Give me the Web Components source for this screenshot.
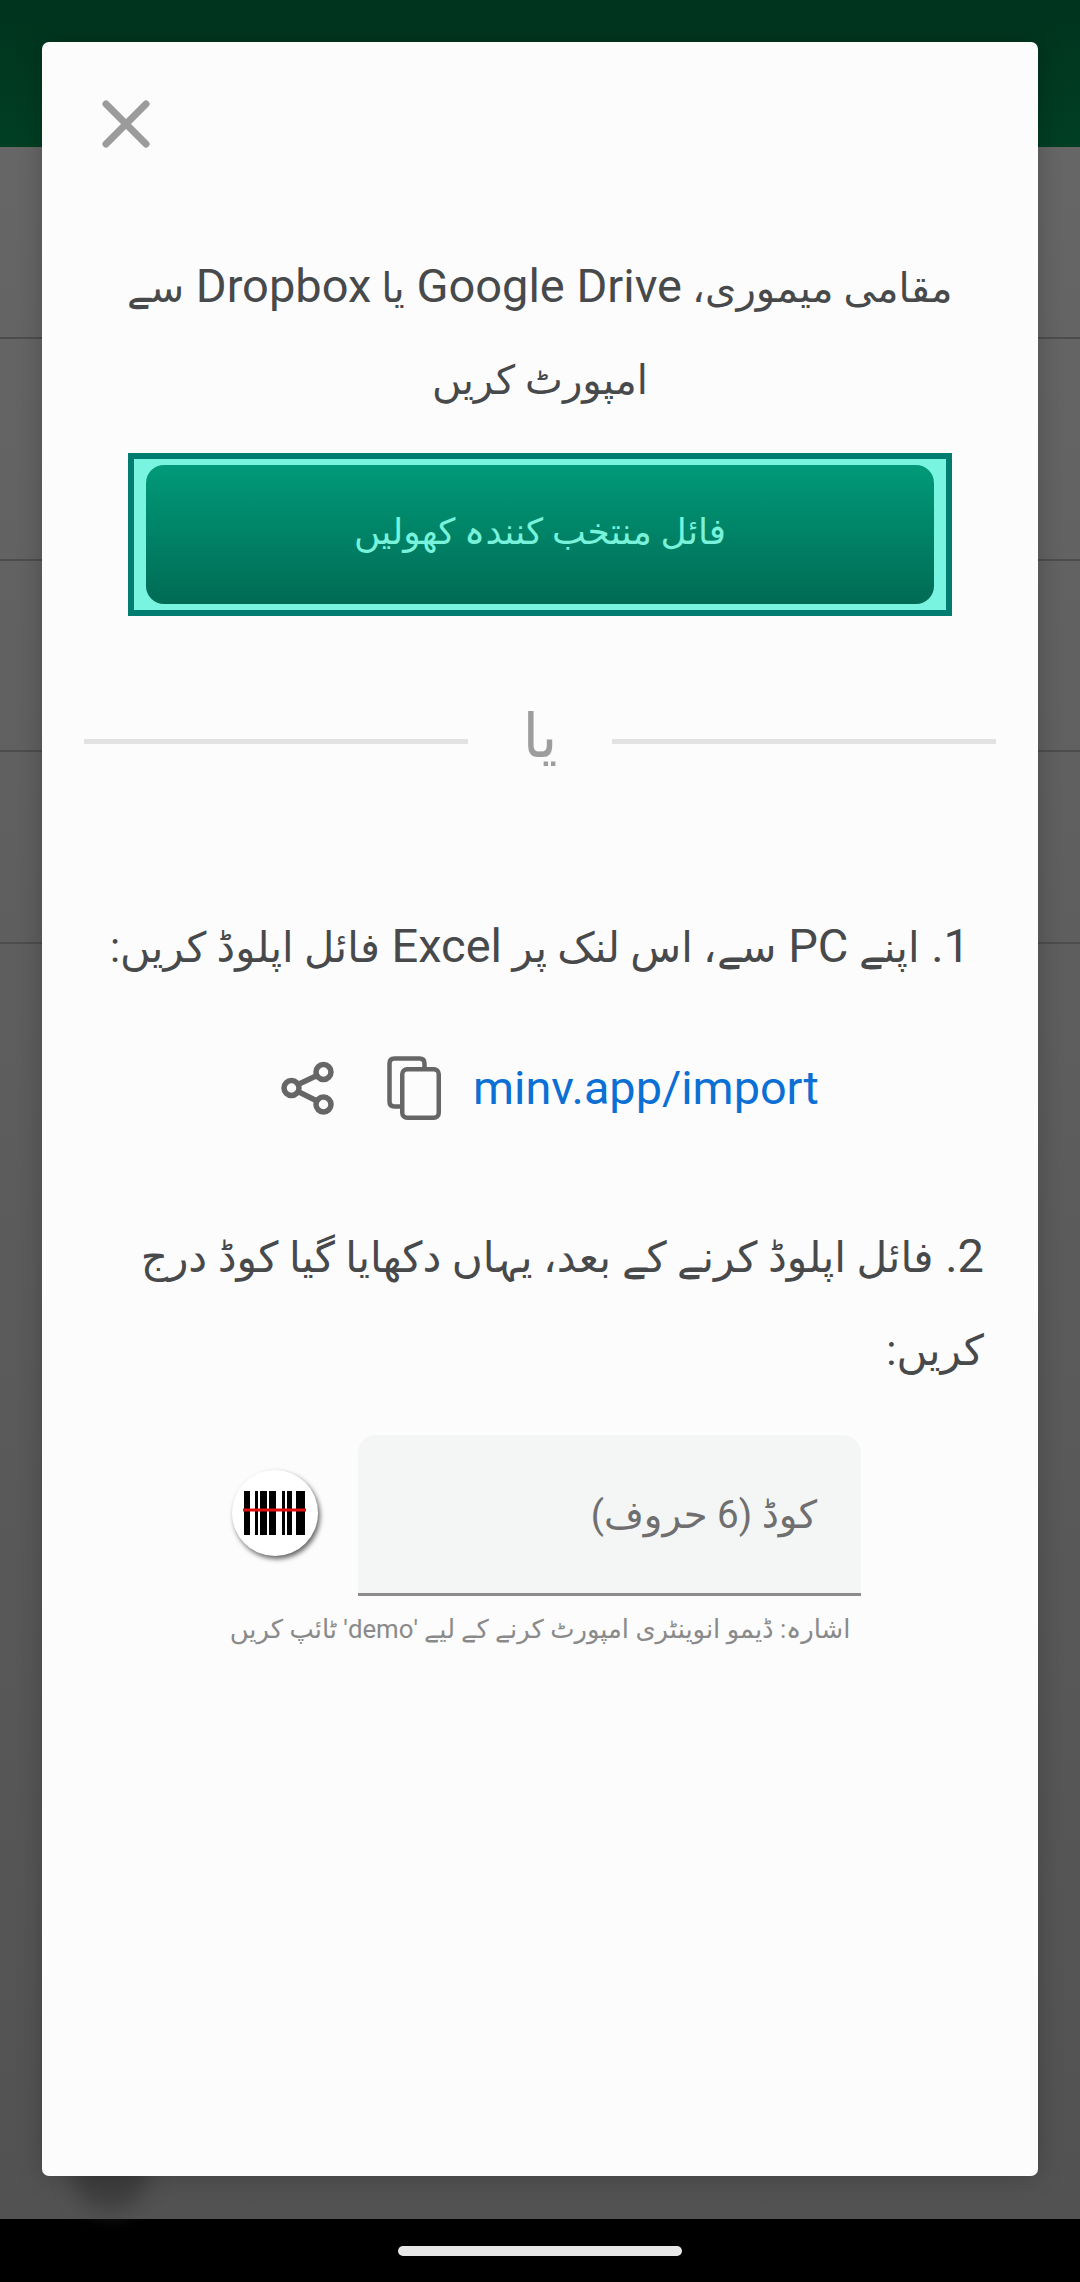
<!DOCTYPE html>
<html lang="ur">
<head>
<meta charset="utf-8">
<style>
html,body{margin:0;padding:0;width:1080px;height:2282px;overflow:hidden;background:#000;}
body{font-family:"Roboto","Noto Sans","DejaVu Sans",sans-serif;}
</style>
</head>
<body>
<app-screen>
  <import-dialog>
    <dialog-text>مقامی میموری، <en-t>Google Drive</en-t> یا <en-t>Dropbox</en-t> سے<br>امپورٹ کریں</dialog-text>
    <file-button>فائل منتخب کنندہ کھولیں</file-button>
    <or-divider>یا</or-divider>
    <dialog-text slot="steps" style="margin-top:122px;font-size:41.700px"><en-t>1.</en-t> اپنے <en-t>PC</en-t> سے، اس لنک پر <en-t>Excel</en-t> فائل اپلوڈ کریں:</dialog-text>
    <link-row slot="steps">minv.app/import</link-row>
    <dialog-text slot="steps" align="start" style="margin-top:75px;font-size:42.300px;line-height:93px"><en-t>2.</en-t> فائل اپلوڈ کرنے کے بعد، یہاں دکھایا گیا کوڈ درج<br>کریں:</dialog-text>
    <code-input slot="steps" placeholder="کوڈ (6 حروف)" hint="اشارہ: ڈیمو انوینٹری امپورٹ کرنے کے لیے 'demo' ٹائپ کریں"></code-input>
  </import-dialog>
</app-screen>

<script>
// small helper so each element is just a template + define
function def(name, html){
  const t = document.createElement('template');
  t.innerHTML = html;
  customElements.define(name, class extends HTMLElement{
    constructor(){
      super();
      this.attachShadow({mode:'open'}).appendChild(t.content.cloneNode(true));
    }
  });
}

def('app-screen',`
<style>
:host{display:flex;flex-direction:column;width:1080px;height:2282px;position:relative;background:#000;}
.bar{height:147px;background:linear-gradient(#00331e,#003f23);flex:none;}
.list{flex:1;background:linear-gradient(#666,#525252);display:flex;flex-direction:column;position:relative;}
.row{border-bottom:2px solid #4d4d4d;box-sizing:border-box;}
.fab{position:absolute;left:72px;bottom:8px;width:76px;height:76px;border-radius:50%;background:#3e3e3e;filter:blur(10px);}
.nav{height:63px;flex:none;background:#000;display:flex;justify-content:center;align-items:flex-start;}
.pill{width:284px;height:10px;margin-top:27px;border-radius:5px;background:#e7e7e7;}
</style>
<div class="bar"></div>
<div class="list">
  <div class="row" style="height:192px"></div>
  <div class="row" style="height:222px"></div>
  <div class="row" style="height:191px"></div>
  <div class="row" style="height:192px"></div>
  <div class="fab"></div>
</div>
<div class="nav"><div class="pill"></div></div>
<slot></slot>
`);

def('import-dialog',`
<style>
:host{display:flex;flex-direction:column;position:absolute;left:42px;top:42px;width:996px;height:2134px;background:#fcfcfc;border-radius:7px;box-shadow:0 0 26px rgba(0,0,0,.22);color:#47494b;}
.close{display:block;margin:58px 0 0 60px;width:48px;height:48px;flex:none;}
.top{margin-top:91.500px;display:flex;flex-direction:column;}
</style>
<svg class="close" viewBox="0 0 48 48"><path d="M4 4L44 44M44 4L4 44" stroke="#9b9b9b" stroke-width="7" stroke-linecap="round" fill="none"/></svg>
<div class="top"><slot></slot></div>
<slot name="steps"></slot>
`);

def('dialog-text',`
<style>
:host{display:block;direction:rtl;text-align:center;font-size:40.200px;line-height:92px;padding:0 54px;white-space:nowrap;}
:host([align=start]){text-align:start;}
</style>
<slot></slot>
`);

// latin runs are set larger than the urdu around them
def('en-t',`
<style>:host{display:inline;font-size:47px;}</style><slot></slot>
`);

def('file-button',`
<style>
:host{display:block;box-sizing:border-box;width:824px;height:163px;margin:26.500px 0 0 86px;border:6px solid #007d70;background:#79f4e0;padding:6px 12px;}
.in{height:139px;border-radius:18px;background:linear-gradient(#009a78,#006b55);color:#78f2da;direction:rtl;font-size:36px;display:flex;align-items:center;justify-content:center;padding-bottom:5px;box-sizing:border-box;}
</style>
<div class="in"><slot></slot></div>
`);

def('or-divider',`
<style>
:host{display:flex;align-items:center;margin:88px 42px 0;height:74px;color:#9d9d9d;font-size:60px;}
.l{height:5px;background:#e2e2e2;flex:1;}
.t{width:144px;text-align:center;direction:rtl;line-height:74px;position:relative;top:-4px;}
</style>
<div class="l"></div><div class="t"><slot></slot></div><div class="l"></div>
`);

def('link-row',`
<style>
:host{display:flex;align-items:center;justify-content:center;margin-top:48px;padding-left:20px;height:92px;}
.a{color:#0b6fd3;font-size:46.800px;margin-left:32px;}
svg{display:block;flex:none;}
.s{margin-right:52px;}
</style>
<svg class="s" width="54" height="54" viewBox="0 0 54 54" fill="none" stroke="#666" stroke-width="5.500">
  <circle cx="42.500" cy="11" r="7.500"/><circle cx="10.500" cy="27" r="7.500"/><circle cx="42.500" cy="43.500" r="7.500"/>
  <path d="M17 23.500L36 14.500M17 30.500L36 40"/>
</svg>
<svg width="54" height="64" viewBox="0 0 54 64" fill="none" stroke="#666" stroke-width="4.500">
  <path d="M14 50.500H7.500Q2.500 50.500 2.500 45.500V7.500Q2.500 2.500 7.500 2.500H32.500Q37.500 2.500 37.500 7.500V13"/>
  <rect x="15.250" y="13.250" width="36.500" height="48.500" rx="5"/>
</svg>
<span class="a"><slot></slot></span>
`);

def('scan-button',`
<style>
:host{display:block;width:86px;height:86px;border-radius:50%;background:#fff;box-shadow:2px 3px 5px rgba(0,0,0,.6);flex:none;position:relative;top:-3px;}
svg{display:block;}
</style>
<svg width="86" height="86" viewBox="0 0 86 86">
  <path fill="#000" d="M12 21h6v44h-6zM23 21h3v44h-3zM28 21h7v44h-7zM37 21h7v44h-7zM50 21h3v44h-3zM55 21h5v44h-5zM64 21h9v44h-9z"/>
  <rect x="11" y="38.500" width="63" height="3" fill="#e01010"/>
</svg>
`);

class CodeInput extends HTMLElement{
  constructor(){
    super();
    this.attachShadow({mode:'open'}).innerHTML = `
<style>
:host{display:block;margin-top:38px;}
.line{display:flex;align-items:center;margin-left:190px;}
.f{margin-left:40px;width:503px;height:161px;box-sizing:border-box;background:#f4f5f5;border-bottom:3px solid #8c8c8c;border-radius:18px 18px 0 0;direction:rtl;display:flex;align-items:center;padding:0 44px;color:#6f6f6f;font-size:38.500px;}
.h{direction:rtl;text-align:center;color:#8a8a8a;font-size:25.800px;margin-top:18px;}
</style>
<div class="line"><scan-button></scan-button><div class="f"></div></div>
<div class="h"></div>`;
    this.shadowRoot.querySelector('.f').textContent = this.getAttribute('placeholder');
    this.shadowRoot.querySelector('.h').textContent = this.getAttribute('hint');
  }
}
customElements.define('code-input',CodeInput);
</script>
</body>
</html>
